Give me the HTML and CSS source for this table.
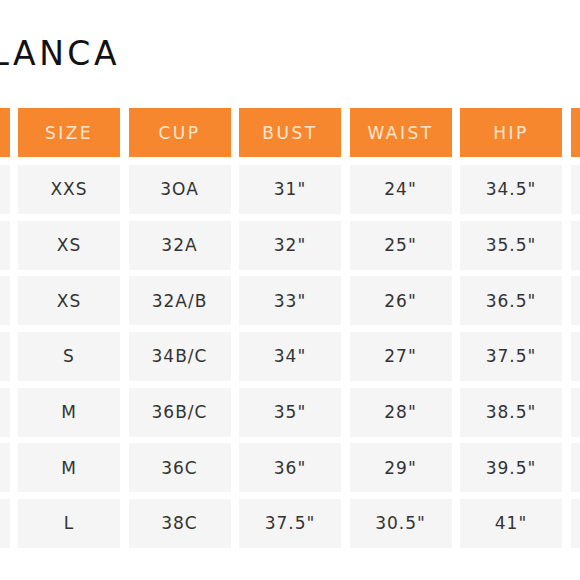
FILE: index.html
```html
<!DOCTYPE html>
<html lang="en">
<head>
<meta charset="utf-8">
<title>Casablanca size chart</title>
<link rel="stylesheet" href="styles.css">
</head>
<body>
<div class="page">
  <div class="title-wrap">
    <h1 class="title">CASABLANCA</h1>
  </div>
  <div class="chart-wrap">
    <div class="chart">
      <div class="cell head"></div>
      <div class="cell head">SIZE</div>
      <div class="cell head">CUP</div>
      <div class="cell head">BUST</div>
      <div class="cell head">WAIST</div>
      <div class="cell head">HIP</div>
      <div class="cell head"></div>

      <div class="cell"></div><div class="cell">XXS</div><div class="cell">3OA</div><div class="cell">31"</div><div class="cell">24"</div><div class="cell">34.5"</div><div class="cell"></div>
      <div class="cell"></div><div class="cell">XS</div><div class="cell">32A</div><div class="cell">32"</div><div class="cell">25"</div><div class="cell">35.5"</div><div class="cell"></div>
      <div class="cell"></div><div class="cell">XS</div><div class="cell">32A/B</div><div class="cell">33"</div><div class="cell">26"</div><div class="cell">36.5"</div><div class="cell"></div>
      <div class="cell"></div><div class="cell">S</div><div class="cell">34B/C</div><div class="cell">34"</div><div class="cell">27"</div><div class="cell">37.5"</div><div class="cell"></div>
      <div class="cell"></div><div class="cell">M</div><div class="cell">36B/C</div><div class="cell">35"</div><div class="cell">28"</div><div class="cell">38.5"</div><div class="cell"></div>
      <div class="cell"></div><div class="cell">M</div><div class="cell">36C</div><div class="cell">36"</div><div class="cell">29"</div><div class="cell">39.5"</div><div class="cell"></div>
      <div class="cell"></div><div class="cell">L</div><div class="cell">38C</div><div class="cell">37.5"</div><div class="cell">30.5"</div><div class="cell">41"</div><div class="cell"></div>
    </div>
  </div>
</div>
</body>
</html>
```

FILE: styles.css
```css
html, body {
  margin: 0;
  padding: 0;
  background: #ffffff;
  overflow: hidden;
}

.page {
  width: 580px;
  height: 580px;
  overflow: hidden;
  font-family: "DejaVu Sans", sans-serif;
}

.title-wrap {
  width: 120px;
  height: 108px;
  display: flex;
  justify-content: flex-end;
  align-items: flex-start;
}

.title {
  margin: 0;
  padding-top: 38px;
  font-family: "DejaVu Sans", sans-serif;
  font-weight: 400;
  font-size: 33px;
  line-height: 32px;
  letter-spacing: 3.5px;
  color: #111111;
  white-space: nowrap;
}

.chart-wrap {
  margin-left: -92.5px;
}

.chart {
  display: grid;
  grid-template-columns: repeat(7, 102px);
  grid-template-rows: 50.33px repeat(7, 49px);
  column-gap: 8.5px;
  row-gap: 6.67px;
}

.cell {
  display: flex;
  align-items: center;
  justify-content: center;
  background: #f5f5f5;
  color: #333333;
  font-size: 17px;
  letter-spacing: 1px;
  white-space: nowrap;
}

.head {
  height: 49px;
  align-self: start;
  background: #f7872e;
  color: #fde8d2;
  font-size: 17px;
  letter-spacing: 2.5px;
}
```
